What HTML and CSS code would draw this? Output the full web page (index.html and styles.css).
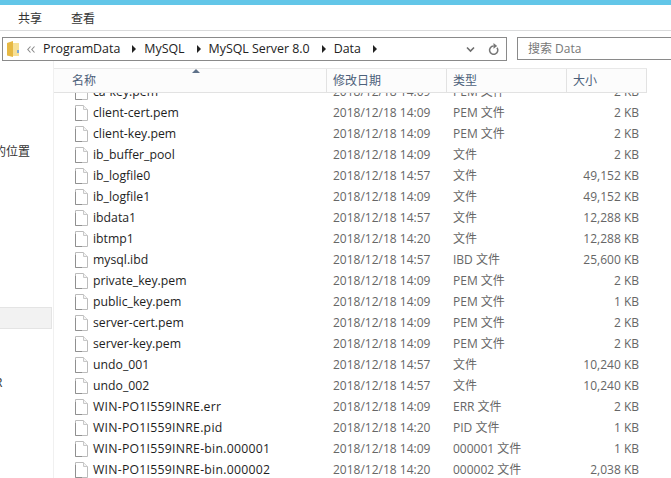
FILE: index.html
```html
<!DOCTYPE html>
<html lang="zh-CN">
<head>
    <meta charset="UTF-8">
    <title>Data</title>
    <link rel="stylesheet" href="styles.css">
</head>
<body>
    <svg class="defs" width="0" height="0">
        <symbol id="file" viewBox="0 0 13 16">
            <path d="M.5.5H8.5L12.5 4.5V15.5H.5Z" fill="#fff" stroke="#bcbcbc"/>
            <path d="M8.5.5V4.5H12.5" fill="#f4f4f4" stroke="#c8c8c8"/>
            <path d="M.5 3V15.5H7" fill="none" stroke="#909090"/>
        </symbol>
    </svg>

    <div class="title-strip"></div>

    <!-- 功能区 -->
    <nav class="ribbon">
        <span class="tab">共享</span>
        <span class="tab">查看</span>
    </nav>

    <!-- 地址栏和搜索框 -->
    <div class="address-row">
        <div class="address">
            <svg class="folder" width="12" height="17" viewBox="0 0 12 17">
                <path d="M0 2 6 0V16L0 14.5Z" fill="#e6b843"/>
                <path d="M6 2H12V15H6Z" fill="#f7e096"/>
                <path d="M10 9h2v3h-2z" fill="#7fa9d8"/>
            </svg>
            <svg class="chevrons" width="8" height="7" viewBox="0 0 8 7">
                <path d="M3.5.5 .8 3.5 3.5 6.5M7.5.5 4.8 3.5 7.5 6.5" fill="none" stroke="#8a8a8a" stroke-width="1.1"/>
            </svg>
            <span class="crumb">ProgramData</span><i class="arrow"></i>
            <span class="crumb">MySQL</span><i class="arrow"></i>
            <span class="crumb">MySQL Server 8.0</span><i class="arrow"></i>
            <span class="crumb">Data</span><i class="arrow"></i>
            <svg class="drop" width="9" height="7" viewBox="0 0 9 7">
                <path d="M1 1.5 4.5 5 8 1.5" fill="none" stroke="#6d6d6d" stroke-width="1.6"/>
            </svg>
            <svg class="refresh" width="11" height="13" viewBox="0 0 12 14">
                <path d="M9.8 5A4.5 4.5 0 1 1 6 3.2" fill="none" stroke="#767676" stroke-width="1.7"/>
                <path d="M6 0V6.2L10 3.1Z" fill="#767676"/>
            </svg>
        </div>
        <div class="search">搜索 Data</div>
    </div>

    <main class="explorer">
        <!-- 左侧导航 -->
        <aside class="sidebar">
            <div class="side-text first">的位置</div>
            <div class="side-selected"></div>
            <div class="side-text last">R</div>
        </aside>

        <!-- 文件列表 -->
        <section class="files">
            <div class="col-header">
                <div class="col col-name">名称<i class="sort"></i></div>
                <div class="col">修改日期</div>
                <div class="col">类型</div>
                <div class="col">大小</div>
            </div>
            <div class="rows" id="rows"></div>
        </section>
    </main>

    <script>
        var files = [
            ["ca-key.pem", "2018/12/18 14:09", "PEM 文件", "2 KB"],
            ["client-cert.pem", "2018/12/18 14:09", "PEM 文件", "2 KB"],
            ["client-key.pem", "2018/12/18 14:09", "PEM 文件", "2 KB"],
            ["ib_buffer_pool", "2018/12/18 14:09", "文件", "2 KB"],
            ["ib_logfile0", "2018/12/18 14:57", "文件", "49,152 KB"],
            ["ib_logfile1", "2018/12/18 14:09", "文件", "49,152 KB"],
            ["ibdata1", "2018/12/18 14:57", "文件", "12,288 KB"],
            ["ibtmp1", "2018/12/18 14:20", "文件", "12,288 KB"],
            ["mysql.ibd", "2018/12/18 14:57", "IBD 文件", "25,600 KB"],
            ["private_key.pem", "2018/12/18 14:09", "PEM 文件", "2 KB"],
            ["public_key.pem", "2018/12/18 14:09", "PEM 文件", "1 KB"],
            ["server-cert.pem", "2018/12/18 14:09", "PEM 文件", "2 KB"],
            ["server-key.pem", "2018/12/18 14:09", "PEM 文件", "2 KB"],
            ["undo_001", "2018/12/18 14:57", "文件", "10,240 KB"],
            ["undo_002", "2018/12/18 14:57", "文件", "10,240 KB"],
            ["WIN-PO1I559INRE.err", "2018/12/18 14:09", "ERR 文件", "2 KB"],
            ["WIN-PO1I559INRE.pid", "2018/12/18 14:20", "PID 文件", "1 KB"],
            ["WIN-PO1I559INRE-bin.000001", "2018/12/18 14:09", "000001 文件", "1 KB"],
            ["WIN-PO1I559INRE-bin.000002", "2018/12/18 14:20", "000002 文件", "2,038 KB"]
        ];

        // 生成文件行
        var html = "";
        files.forEach(function (f) {
            var nameClass = f[0].indexOf("WIN") === 0 ? "cell-name wide" : "cell-name";
            html += '<div class="row">' +
                '<div class="' + nameClass + '"><svg class="file-icon" width="13" height="16"><use href="#file"/></svg>' + f[0] + '</div>' +
                '<div class="cell-info">' + f[1] + '</div>' +
                '<div class="cell-info">' + f[2] + '</div>' +
                '<div class="cell-info cell-size">' + f[3] + '</div>' +
                '</div>';
        });
        document.getElementById("rows").innerHTML = html;
    </script>
</body>
</html>
```

FILE: styles.css
```css
/* 通用样式 */
html, body {
    margin: 0;
    padding: 0;
    height: 478px;
    overflow: hidden;
}

body {
    background-color: #fff;
    color: #1e1e1e;
    font-family: "Open Sans", "Noto Sans CJK SC", sans-serif;
    font-size: 12px;
}

.defs {
    display: block;
    height: 0;
}

.title-strip {
    height: 5px;
    background-color: #63c6e8;
}

/* 功能区 */
.ribbon {
    display: flex;
    gap: 29px;
    height: 25px;
    padding-left: 18px;
    border-bottom: 1px solid #dadbdc;
    line-height: 27px;
    color: #333;
}

/* 地址栏 */
.address-row {
    display: flex;
    gap: 10px;
    height: 24px;
    padding: 6px 0 0 2px;
}

.address {
    display: flex;
    align-items: center;
    box-sizing: border-box;
    width: 505px;
    height: 24px;
    padding-left: 4px;
    border: 1px solid #8a8a8a;
}

.folder {
    margin-right: 8px;
}

.chevrons {
    margin-right: 8px;
}

.crumb {
    padding-bottom: 2px;
    font-size: 12.4px;
    color: #222;
}

.arrow {
    width: 0;
    height: 0;
    margin: 0 8px 0 12px;
    border-left: 4px solid #222;
    border-top: 4px solid transparent;
    border-bottom: 4px solid transparent;
}

.drop {
    margin-left: auto;
}

.refresh {
    margin: 0 7px 0 13px;
}

.search {
    box-sizing: border-box;
    flex: 1;
    height: 23px;
    padding-left: 10px;
    border: 1px solid #8a8a8a;
    border-right: 0;
    line-height: 21px;
    color: #777;
}

/* 主体 */
.explorer {
    display: flex;
    height: 418px;
}

.sidebar {
    box-sizing: border-box;
    width: 54px;
    border-right: 1px solid #f0f0f0;
    overflow: hidden;
}

.side-text {
    color: #333;
    white-space: nowrap;
    line-height: 16px;
}

.side-text.first {
    padding-top: 83px;
    margin-left: -6px;
}

.side-selected {
    height: 20px;
    margin-top: 147px;
    background-color: #f2f2f2;
    border: 1px solid #e4e4e4;
    border-left: 0;
    width: 51px;
}

.side-text.last {
    margin-top: 46px;
    margin-left: -5px;
}

/* 文件列表 */
.files {
    position: relative;
    width: 593px;
    height: 418px;
    margin-top: 7px;
    overflow: hidden;
}

.col-header {
    display: grid;
    grid-template-columns: 273px 120px 120px 80px;
    box-sizing: border-box;
    height: 25px;
    background-color: #fcfcfc;
    border-top: 1px solid #e8e8e8;
    border-bottom: 1px solid #e2e2e2;
    position: relative;
    z-index: 1;
}

.col {
    position: relative;
    box-sizing: border-box;
    padding-left: 6px;
    border-right: 1px solid #e2e2e2;
    line-height: 24px;
    color: #4c607a;
}

.col-name {
    padding-left: 18px;
}

/* 排序小三角 */
.sort {
    position: absolute;
    left: 138px;
    top: 0;
    width: 0;
    height: 0;
    border-left: 4px solid transparent;
    border-right: 4px solid transparent;
    border-bottom: 4px solid #5e7189;
}

.rows {
    margin-top: -12px;
}

.row {
    display: grid;
    grid-template-columns: 273px 120px 120px 72px;
    height: 21px;
    line-height: 21px;
    white-space: nowrap;
}

.cell-name {
    display: flex;
    align-items: center;
    padding-left: 21px;
    font-size: 12.25px;
    color: #1e1e1e;
}

.cell-name.wide {
    letter-spacing: .26px;
}

.file-icon {
    margin-right: 5px;
}

.cell-info {
    padding-left: 6px;
    color: #666;
}

.cell-size {
    text-align: right;
    padding-left: 0;
}
```
